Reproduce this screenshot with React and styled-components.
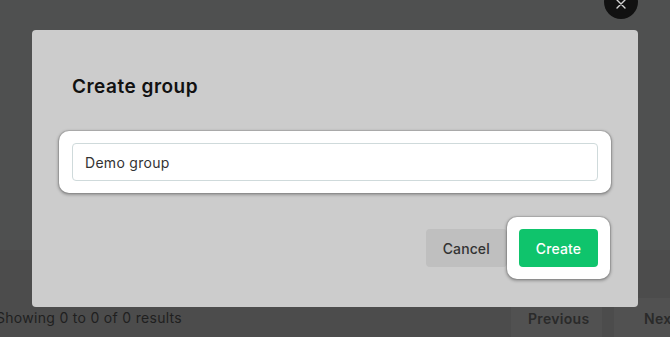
import React from "react";
import styled, { createGlobalStyle } from "styled-components";

const Global = createGlobalStyle`
  html, body { margin: 0; padding: 0; }
  body {
    width: 670px;
    height: 337px;
    overflow: hidden;
    background: #4f5050;
    font-family: Inter, "Noto Sans", sans-serif;
    letter-spacing: 0.3px;
  }
  * { box-sizing: border-box; }
`;

const Page = styled.div`
  display: flex;
  flex-direction: column;
  width: 670px;
  height: 337px;
  overflow: hidden;
`;

const Content = styled.main`
  height: 250px;
  background: #4f5050;
`;

const Footer = styled.footer`
  flex: 1;
  display: flex;
  align-items: flex-end;
  justify-content: space-between;
  background: #4c4c4c;
  margin: 0 -35px 0 -4px;
`;

const Summary = styled.span`
  font-size: 14px;
  line-height: 40px;
  color: #1f1f1f;
  margin-bottom: -1px;
`;

const Pager = styled.div`
  display: flex;
  gap: 12px;
  margin-bottom: -1px;
`;

const PagerButton = styled.button`
  height: 40px;
  width: 91px;
  padding: 0 0 0 ${(p) => p.$indent}px;
  text-align: left;
  border: none;
  background: #515151;
  font-family: inherit;
  letter-spacing: inherit;
  font-size: 14px;
  font-weight: 600;
  color: #2a2a2a;
`;

const CloseButton = styled.button`
  position: fixed;
  left: 604px;
  top: -15px;
  width: 34px;
  height: 34px;
  border-radius: 50%;
  border: none;
  background: #111111;
  padding: 3px 0 0 0;
  display: flex;
  align-items: center;
  justify-content: center;
`;

const Modal = styled.section`
  position: fixed;
  left: 32px;
  top: 30px;
  width: 606px;
  height: 277px;
  background: #cccccc;
  border-radius: 4px;
  padding: 43px 40px 40px;
  display: flex;
  flex-direction: column;
`;

const Title = styled.h2`
  margin: 0 0 42px;
  font-size: 19px;
  line-height: 28px;
  letter-spacing: 0.5px;
  font-weight: 600;
  color: #111111;
`;

const Spotlight = styled.div`
  background: #ffffff;
  border-radius: 10px;
  padding: 12px ${(p) => p.$side}px;
  margin: -12px -${(p) => p.$side}px;
  box-shadow: 0 0 0 1px rgba(0, 0, 0, 0.08), 0 1px 3px 1px rgba(0, 0, 0, 0.28);
`;

const Input = styled.input`
  display: block;
  width: 100%;
  height: 38px;
  border: 1px solid #cfdadb;
  border-radius: 4px;
  padding: 0 12px;
  font-family: inherit;
  letter-spacing: inherit;
  font-size: 14px;
  color: #333333;
  background: #ffffff;
  outline: none;
`;

const Actions = styled.div`
  margin-top: 48px;
  display: flex;
  justify-content: flex-end;
  align-items: center;
  gap: 12px;
`;

const Button = styled.button`
  height: 38px;
  padding: 0 17px;
  border: none;
  border-radius: 4px;
  font-family: inherit;
  letter-spacing: 0.1px;
  font-size: 14px;
  font-weight: 500;
  background: ${(p) => (p.$primary ? "#0fc46c" : "#bfbfbf")};
  color: ${(p) => (p.$primary ? "#ffffff" : "#333333")};
`;

export default function App() {
  return (
    <>
      <Global />
      <Page>
        <Content />
        <Footer>
          <Summary>Showing 0 to 0 of 0 results</Summary>
          <Pager>
            <PagerButton $indent={17}>Previous</PagerButton>
            <PagerButton $indent={30}>Next</PagerButton>
          </Pager>
        </Footer>
      </Page>
      <Modal>
        <Title>Create group</Title>
        <Spotlight $side={13}>
          <Input defaultValue="Demo group" />
        </Spotlight>
        <Actions>
          <Button>Cancel</Button>
          <Spotlight $side={12}>
            <Button $primary>Create</Button>
          </Spotlight>
        </Actions>
      </Modal>
      <CloseButton aria-label="Close">
        <svg width="10" height="10" viewBox="0 0 10 10">
          <path d="M1 1 L9 9 M9 1 L1 9" stroke="#d4d4d4" strokeWidth="1.4" strokeLinecap="round" />
        </svg>
      </CloseButton>
    </>
  );
}
